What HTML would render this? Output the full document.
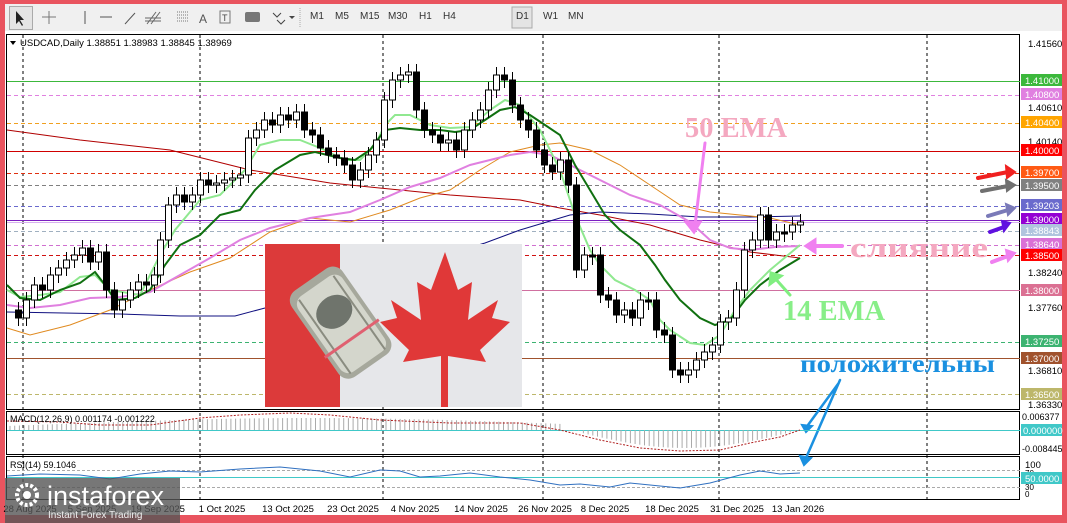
<!DOCTYPE html>
<html><head><meta charset="utf-8">
<style>
html,body{margin:0;padding:0;}
body{width:1067px;height:523px;background:#e9545f;position:relative;overflow:hidden;font-family:"Liberation Sans",sans-serif;}
.tb{position:absolute;left:5px;top:4px;width:1057px;height:27px;background:#f0f0f0;}
.tb span{position:absolute;top:7px;font-size:10px;color:#333;}
.win{position:absolute;left:5px;top:31px;width:1057px;height:484px;background:#fff;}
</style></head><body>
<div class="tb">
 <div style="position:absolute;left:4px;top:2px;width:22px;height:22px;border:1px solid #aaa;background:#e4e4e4"></div>
 <svg width="600" height="27" style="position:absolute;left:0;top:0">
  <path d="M11 7 L11 20 L14 17 L17 22 L18 21 L15 16 L19 16 Z" fill="#222"/>
  <path d="M44 7v13M37 13h14" stroke="#777"/>
  <path d="M80 7v13" stroke="#555"/><path d="M95 13h12" stroke="#555"/><path d="M120 20l10-11" stroke="#555"/>
  <path d="M142 20l9-12M146 20l9-12M140 14h16M140 17h16" stroke="#666"/>
  <path d="M172 8h12M172 11h12M172 14h12M172 17h12" stroke="#777" stroke-dasharray="1 1"/>
  <text x="194" y="19" font-size="12" fill="#555">A</text>
  <rect x="215" y="7" width="10" height="12" fill="none" stroke="#777"/><text x="217" y="17" font-size="9" fill="#444">T</text>
  <rect x="240" y="8" width="15" height="10" rx="2" fill="#777"/>
  <path d="M268 9l4 4l4-4M272 16l4 4l4-4" stroke="#444" fill="none"/><path d="M284 12l3 3l3-3z" fill="#444"/>
  <path d="M295 4v20" stroke="#aaa" stroke-dasharray="1 1"/>
  <rect x="507" y="3" width="20" height="21" fill="#e4e4e4" stroke="#aaa"/>
 </svg>
 <span style="left:305px">M1</span><span style="left:330px">M5</span><span style="left:355px">M15</span><span style="left:383px">M30</span><span style="left:414px">H1</span><span style="left:438px">H4</span><span style="left:511px">D1</span><span style="left:538px">W1</span><span style="left:563px">MN</span>
</div>
<div class="win"></div>
<svg id="c" width="1067" height="523" style="position:absolute;left:0;top:0" font-family="Liberation Sans, sans-serif">
 <rect x="6.5" y="34.5" width="1013" height="375" fill="none" stroke="#000"/>
 <rect x="6.5" y="411.5" width="1013" height="43" fill="none" stroke="#000"/>
 <rect x="6.5" y="456.5" width="1013" height="43" fill="none" stroke="#000"/>
 <g stroke="#000" stroke-dasharray="3 3">
  <path d="M23 35v465M200 35v465M383 35v465M543 35v465M719 35v465M927 35v465"/>
 </g>
 <g fill="none">
  <path d="M7 81.5h1013" stroke="#3cb83c"/>
  <path d="M7 95.5h1013" stroke="#e080e0" stroke-dasharray="4 3"/>
  <path d="M7 123.5h1013" stroke="#f0a020" stroke-dasharray="4 3"/>
  <path d="M7 151.5h1013" stroke="#d00000"/>
  <path d="M7 173.5h1013" stroke="#e03010" stroke-dasharray="4 3"/>
  <path d="M7 185.5h1013" stroke="#808080" stroke-dasharray="4 3"/>
  <path d="M7 206.5h1013" stroke="#6a6acd" stroke-dasharray="4 3"/>
  <path d="M7 220.5h1013" stroke="#7b20c0"/>
  <path d="M7 222.5h1013" stroke="#d8b0f0"/>
  <path d="M7 231.5h1013" stroke="#a0b0c0" stroke-dasharray="4 3"/>
  <path d="M7 245.5h1013" stroke="#d070d0" stroke-dasharray="4 3"/>
  <path d="M7 255.5h1013" stroke="#d01010" stroke-dasharray="4 3"/>
  <path d="M7 290.5h1013" stroke="#d070a0"/>
  <path d="M7 342.5h1013" stroke="#3cb371" stroke-dasharray="4 3"/>
  <path d="M7 358.5h1013" stroke="#a0522d"/>
  <path d="M7 394.5h1013" stroke="#bdb76b" stroke-dasharray="4 3"/>
 </g>
 <g fill="none">
  <polyline stroke="#b00000" points="7,130 80,140 170,150 250,170 330,183 400,190 450,195 520,200 560,208 600,215 650,225 700,240 750,252 800,258"/>
  <polyline stroke="#101080" points="7,312 120,314 180,316 235,316 265,308 485,243 520,230 570,215 600,212 650,214 700,217 750,217 800,216"/>
  <polyline stroke="#e08a20" points="7,328 30,335 70,325 110,310 150,290 190,272 230,258 270,232 310,218 350,222 390,210 420,198 450,190 480,170 510,152 540,145 560,143 590,150 620,165 650,185 680,205 710,212 740,215 770,218 800,225"/>
  <polyline stroke="#e080e0" stroke-width="2" points="7,305 30,308 60,305 90,298 120,297 150,292 180,275 210,258 240,240 270,228 310,218 350,212 380,200 410,187 440,178 470,165 490,160 510,155 530,152 550,155 570,165 600,180 630,195 660,205 690,222 710,240 730,248 750,250 775,247 800,246"/>
  <polyline stroke="#90e890" stroke-width="2" points="7,290 20,297 40,295 60,292 80,277 95,275 110,290 140,295 160,255 175,230 200,200 220,195 245,170 260,145 280,140 300,140 320,148 345,160 360,160 375,145 385,125 395,115 410,115 430,125 450,128 470,127 490,110 505,100 520,105 540,130 560,170 575,215 590,250 600,265 615,280 635,290 650,300 660,320 670,330 690,343 705,345 720,335 735,310 750,290 770,270 800,245"/>
  <polyline stroke="#107010" stroke-width="2" points="7,285 20,298 40,300 60,290 80,283 95,272 105,285 115,300 135,298 150,290 165,265 180,245 200,235 220,215 240,210 255,190 275,170 300,155 315,152 340,158 355,160 370,150 385,130 400,128 420,130 440,130 455,132 470,130 485,120 500,110 515,107 530,115 545,125 560,135 575,165 590,190 605,215 620,230 640,245 655,265 665,280 680,300 700,318 715,325 730,320 745,300 760,285 780,270 800,258"/>
 </g>
 <g id="cand"></g>
 <!-- image inset -->
 <rect x="265" y="244" width="257" height="163" fill="#e6e7ea"/>
 <rect x="265" y="244" width="75" height="163" fill="#dc3a3a"/>
 <path d="M445 252 L458 290 L472 282 L468 320 L498 300 L492 318 L510 322 L480 350 L486 362 L448 356 L448 407 L441 407 L441 356 L403 362 L409 350 L380 322 L397 318 L391 300 L421 320 L417 282 L431 290 Z" fill="#e03838"/>
 <g transform="rotate(55 340 320)">
  <rect x="290" y="290" width="105" height="62" rx="12" fill="#a6a89c"/>
  <rect x="298" y="294" width="92" height="54" rx="10" fill="#d4d6cc"/>
  <ellipse cx="330" cy="320" rx="16" ry="19" fill="#6f746c"/>
  <path d="M300 300h90M300 342h90" stroke="#8a8c80" stroke-width="2"/>
  <path d="M362 288v66" stroke="#e06070" stroke-width="3"/>
 </g>
 <g font-size="9.5" fill="#000">
  <text x="1028" y="47">1.41560</text><text x="1028" y="111">1.40610</text><text x="1028" y="145">1.40140</text>
  <text x="1028" y="276">1.38240</text><text x="1028" y="311">1.37760</text><text x="1028" y="374">1.36810</text><text x="1028" y="408">1.36330</text>
  <text x="1022" y="420" font-size="9">0.006377</text><text x="1022" y="452" font-size="9">-0.008445</text>
  <text x="1025" y="468">100</text><text x="1025" y="476" font-size="8">70</text><text x="1025" y="490" font-size="8">30</text><text x="1025" y="497" font-size="8">0</text>
 </g>
 <g font-size="9.5" fill="#fff">
  <rect x="1021" y="74" width="41" height="12" fill="#3cb83c"/><text x="1025" y="84">1.41000</text>
  <rect x="1021" y="88" width="41" height="12" fill="#e080e0"/><text x="1025" y="98">1.40800</text>
  <rect x="1021" y="116" width="41" height="12" fill="#ffa500"/><text x="1025" y="126">1.40400</text>
  <rect x="1021" y="144" width="41" height="12" fill="#ff0000"/><text x="1025" y="154">1.40000</text>
  <rect x="1021" y="166" width="41" height="12" fill="#ff5a14"/><text x="1025" y="176">1.39700</text>
  <rect x="1021" y="179" width="41" height="12" fill="#808080"/><text x="1025" y="189">1.39500</text>
  <rect x="1021" y="199" width="41" height="12" fill="#6a6acd"/><text x="1025" y="209">1.39203</text>
  <rect x="1021" y="213" width="41" height="12" fill="#9400d3"/><text x="1025" y="223">1.39000</text>
  <rect x="1021" y="224" width="41" height="12" fill="#b0c4de"/><text x="1025" y="234">1.38843</text>
  <rect x="1021" y="238" width="41" height="12" fill="#da70d6"/><text x="1025" y="248">1.38640</text>
  <rect x="1021" y="249" width="41" height="12" fill="#ff0000"/><text x="1025" y="259">1.38500</text>
  <rect x="1021" y="284" width="41" height="12" fill="#db7093"/><text x="1025" y="294">1.38000</text>
  <rect x="1021" y="335" width="41" height="12" fill="#3cb371"/><text x="1025" y="345">1.37250</text>
  <rect x="1021" y="352" width="41" height="12" fill="#a0522d"/><text x="1025" y="362">1.37000</text>
  <rect x="1021" y="388" width="41" height="12" fill="#bdb76b"/><text x="1025" y="398">1.36500</text>
  <rect x="1021" y="424" width="41" height="12" fill="#40c8c8"/><text x="1023" y="434">0.000000</text>
  <rect x="1021" y="472" width="41" height="12" fill="#40c8c8"/><text x="1025" y="482">50.0000</text>
 </g>
 <text x="20" y="46" font-size="9.5" fill="#000">USDCAD,Daily  1.38851 1.38983 1.38845 1.38969</text>
 <path d="M10 41l3 4l3-4z" fill="#000"/>
 <g font-family="Liberation Serif, serif" font-weight="bold">
  <text x="685" y="137" font-size="28" fill="#f4a8c0" textLength="102" lengthAdjust="spacingAndGlyphs">50 EMA</text>
  <text x="850" y="257" font-size="28" fill="#f4a8c0" textLength="138" lengthAdjust="spacingAndGlyphs">слияние</text>
  <text x="783" y="320" font-size="28" fill="#88ee88" textLength="102" lengthAdjust="spacingAndGlyphs">14 EMA</text>
  <text x="800" y="372" font-size="25" fill="#1a90e0" textLength="195" lengthAdjust="spacingAndGlyphs">положительны</text>
 </g>
 <g stroke-linecap="round">
  <path d="M705 143 L695 225" stroke="#f080f0" stroke-width="3"/><path d="M686 222 L694 232 L700 222z" fill="#f080f0" stroke="#f080f0" stroke-width="3"/>
  <path d="M842 246 L812 246" stroke="#f080f0" stroke-width="4"/><path d="M815 240 L806 246 L815 252z" fill="#f080f0" stroke="#f080f0" stroke-width="3"/>
  <path d="M790 295 L773 276" stroke="#80ee80" stroke-width="3"/><path d="M770 284 L771 273 L781 276z" fill="#80ee80" stroke="#80ee80" stroke-width="3"/>
  <path d="M838 384 L808 425M840 380 L806 458" stroke="#1a90e0" stroke-width="2.5"/>
  <path d="M802 425 L806 432 L812 426z M800 456 L804 465 L811 458z" fill="#1a90e0" stroke="#1a90e0" stroke-width="2"/>
  <path d="M978 178 L1008 172" stroke="#f02020" stroke-width="4"/><path d="M1006 166 L1015 172 L1007 178z" fill="#f02020" stroke="#f02020" stroke-width="2"/>
  <path d="M982 191 L1008 186" stroke="#707070" stroke-width="4"/><path d="M1006 180 L1015 185 L1007 191z" fill="#707070" stroke="#707070" stroke-width="2"/>
  <path d="M988 216 L1008 210" stroke="#7a7ab8" stroke-width="4"/><path d="M1006 204 L1015 208 L1008 215z" fill="#7a7ab8" stroke="#7a7ab8" stroke-width="2"/>
  <path d="M990 232 L1004 227" stroke="#6010e0" stroke-width="4"/><path d="M1002 221 L1010 223 L1004 231z" fill="#6010e0" stroke="#6010e0" stroke-width="2"/>
  <path d="M992 262 L1008 256" stroke="#f080f0" stroke-width="4"/><path d="M1006 250 L1015 253 L1008 261z" fill="#f080f0" stroke="#f080f0" stroke-width="2"/>
 </g>
 <path d="M7 430.5h1013" stroke="#40c8c8"/>
 <g id="macd"></g>
 <polyline fill="none" stroke="#b02020" stroke-dasharray="2 1.5" points="7,421 60,422 100,425 150,425 200,418 240,415 290,413 330,415 380,420 450,423 520,423 560,430 600,440 640,448 680,451 720,450 750,443 780,437 800,430"/>
 <text x="10" y="422" font-size="9" fill="#000">MACD(12,26,9) 0.001174 -0.001222</text>
 <path d="M7 470.5h1013M7 487.5h1013" stroke="#aaa" stroke-dasharray="3 2"/>
 <path d="M7 477.5h1013" stroke="#40c8c8"/>
 <polyline fill="none" stroke="#3070c0" points="7,476 40,474 80,475 110,479 140,474 170,471 200,472 240,469 280,467 320,471 350,477 380,470 400,471 420,477 440,476 470,473 500,477 530,480 560,485 580,484 610,487 630,483 660,486 680,488 710,483 740,475 760,471 780,474 800,473"/>
 <text x="10" y="468" font-size="9" fill="#000">RSI(14) 59.1046</text>
 <g font-size="9.5" fill="#000" text-anchor="middle">
  <text x="30" y="512">28 Aug 2025</text><text x="92" y="512">5 Sep 2025</text><text x="158" y="512">19 Sep 2025</text>
  <text x="222" y="512">1 Oct 2025</text><text x="288" y="512">13 Oct 2025</text><text x="353" y="512">23 Oct 2025</text>
  <text x="415" y="512">4 Nov 2025</text><text x="481" y="512">14 Nov 2025</text><text x="545" y="512">26 Nov 2025</text>
  <text x="605" y="512">8 Dec 2025</text><text x="672" y="512">18 Dec 2025</text><text x="737" y="512">31 Dec 2025</text><text x="798" y="512">13 Jan 2026</text>
 </g>
 <rect x="5" y="478" width="175" height="45" fill="#555" opacity="0.8"/>
 <circle cx="27" cy="495" r="10" fill="none" stroke="#fff" stroke-width="4" stroke-dasharray="3 2"/>
 <circle cx="27" cy="495" r="4" fill="#fff"/>
 <text x="47" y="505" font-size="27" fill="#fff">instaforex</text>
 <text x="48" y="518" font-size="10" fill="#eee">Instant Forex Trading</text>
</svg>
<script>
(function(){
var pts=[[10,310],[18,318],[26,300],[34,285],[42,290],[50,275],[58,268],[66,260],[74,255],[82,248],[90,262],[98,252],[106,290],[114,310],[122,300],[130,290],[138,282],[146,285],[154,275],[160,240],[168,205],[176,195],[184,202],[192,195],[200,180],[208,185],[216,183],[224,180],[232,178],[240,175],[248,138],[256,130],[264,120],[272,125],[280,115],[288,120],[296,112],[304,130],[312,135],[320,148],[328,155],[336,158],[344,165],[352,180],[360,170],[368,155],[376,140],[384,100],[392,80],[400,75],[408,72],[416,110],[424,130],[432,135],[440,143],[448,140],[456,150],[464,130],[472,120],[480,110],[488,90],[496,75],[504,80],[512,105],[520,120],[528,130],[536,150],[544,165],[552,172],[560,160],[568,185],[576,270],[584,255],[592,255],[600,295],[608,300],[616,315],[624,310],[632,318],[640,300],[648,300],[656,330],[664,335],[672,370],[680,375],[688,370],[696,360],[704,352],[712,345],[720,322],[728,318],[736,290],[744,250],[752,240],[760,215],[768,240],[776,232],[784,232],[792,225],[800,222]];
var g=document.getElementById('cand'),h='';
for(var i=1;i<pts.length;i++){var x=pts[i][0],o=pts[i-1][1],c=pts[i][1];var t=Math.min(o,c),b=Math.max(o,c);if(b-t<2)b=t+2;
var up=c<o;h+='<line x1="'+(x+0.5)+'" x2="'+(x+0.5)+'" y1="'+(t-8)+'" y2="'+(b+8)+'" stroke="#000"/>';
h+='<rect x="'+(x-2.5)+'" y="'+t+'" width="6" height="'+(b-t)+'" fill="'+(up?'#fff':'#000')+'" stroke="#000"/>';}
g.innerHTML=h;
var m=document.getElementById('macd'),s='';
for(var x=10;x<800;x+=4.7){var v;if(x<570){v=-(6+6*Math.sin((x-60)/160))}else{v=18*Math.sin((x-570)/230*Math.PI)}if(x>560&&x<580)v=1;
s+='<line x1="'+x+'" x2="'+x+'" y1="430" y2="'+(430+v)+'" stroke="#aaa" stroke-width="1"/>';}
m.innerHTML=s;
})();
</script>
</body></html>
